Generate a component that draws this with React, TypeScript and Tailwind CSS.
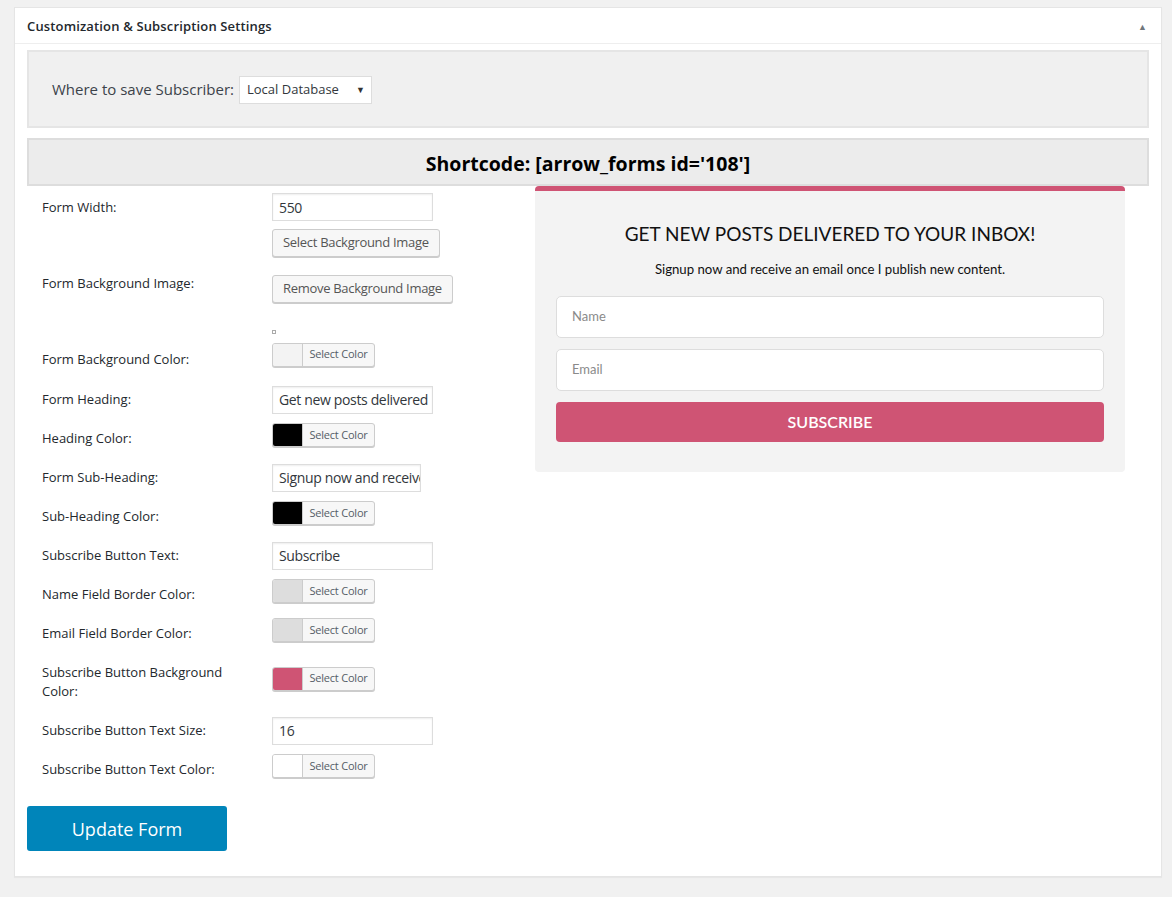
import React from "react"

const ColorButton = ({ color }: { color: string }) => (
    <button
        type="button"
        className="mb-[7px] flex h-[24px] w-[103px] overflow-hidden rounded-[3px] border border-[#cccccc] bg-[#f7f7f7] p-0 shadow-[0_1px_0_#cccccc]"
    >
        <span className="h-full w-[30px] border-r border-[#cccccc]" style={{ backgroundColor: color }} />
        <span className="flex h-full flex-1 items-center justify-center text-[11px] tracking-[-0.2px] text-[#555d66]">Select Color</span>
    </button>
)

const TextInput = ({ value, width = "w-[161px]" }: { value: string; width?: string }) => (
    <div className={`flex h-[28px] items-center overflow-hidden whitespace-nowrap border border-[#dddddd] bg-white px-[6px] text-[14px] tracking-[-0.35px] text-[#32373c] shadow-[inset_0_1px_2px_rgba(0,0,0,0.07)] ${width}`}>
        {value}
    </div>
)

const Row = ({ label, h, children }: { label: React.ReactNode; h: string; children: React.ReactNode }) => (
    <div className={`flex items-center ${h}`}>
        <div className="w-[230px] pr-[20px] text-[13px] leading-[19px] text-[#23282d]">{label}</div>
        <div>{children}</div>
    </div>
)

const WpButton = ({ children }: { children: React.ReactNode }) => (
    <button
        type="button"
        className="h-[28px] whitespace-nowrap rounded-[3px] border border-[#cccccc] bg-[#f7f7f7] px-[10px] text-[13px] tracking-[-0.3px] text-[#555555] shadow-[0_1px_0_#cccccc]"
    >
        {children}
    </button>
)

export default function App() {
    return (
        <div className="min-h-[897px] bg-[#f1f1f1] pl-[14px] pt-[7px] font-['Open_Sans',sans-serif]">
            <div className="w-[1148px] border border-[#e5e5e5] bg-white shadow-[0_1px_1px_rgba(0,0,0,0.04)]">
                {/* header */}
                <div className="flex h-[36px] items-center justify-between border-b border-[#eeeeee] pl-[12px] pr-[14px] pt-[2px]">
                    <h2 className="text-[13px] font-semibold tracking-[0.15px] text-[#23282d]">Customization &amp; Subscription Settings</h2>
                    <span className="text-[9px] text-[#72777c]">▲</span>
                </div>

                <div className="px-[12px] pb-[25px] pt-[6px]">
                    {/* save location */}
                    <div className="flex h-[78px] items-center border-2 border-[#e5e5e5] bg-[#f0f0f0] pl-[23px] pt-[1px]">
                        <span className="text-[15px] text-[#3c434a]">Where to save Subscriber:</span>
                        <div className="ml-[5px] flex h-[28px] w-[133px] items-center justify-between border border-[#dddddd] bg-white pl-[7px] pr-[6px] text-[13px] text-[#32373c]">
                            <span>Local Database</span>
                            <span className="text-[9px] text-[#333333]">▼</span>
                        </div>
                    </div>

                    {/* shortcode */}
                    <div className="mt-[10px] flex h-[48px] items-center justify-center border-2 border-[#dddddd] bg-[#ececec] pt-[3px]">
                        <span className="text-[19.5px] font-bold text-black">Shortcode: [arrow_forms id='108']</span>
                    </div>

                    <div className="flex">
                        {/* settings */}
                        <div className="w-[508px] pl-[15px] pt-[1px]">
                            <Row label="Form Width:" h="h-[40px]">
                                <TextInput value="550" />
                            </Row>
                            <Row label={<span className="block pt-[3px]">Form Background Image:</span>} h="h-[109px]">
                                <div className="flex flex-col items-start">
                                    <WpButton>Select Background Image</WpButton>
                                    <div className="mt-[18px]">
                                        <WpButton>Remove Background Image</WpButton>
                                    </div>
                                    <div className="mt-[27px] h-[4px] w-[4px] border border-[#aaaaaa]" />
                                </div>
                            </Row>
                            <Row label={<span className="block pt-[2px]">Form Background Color:</span>} h="h-[44px]">
                                <ColorButton color="#f3f3f3" />
                            </Row>
                            <Row label="Form Heading:" h="h-[39px]">
                                <TextInput value="Get new posts delivered" />
                            </Row>
                            <Row label="Heading Color:" h="h-[39px]">
                                <ColorButton color="#000000" />
                            </Row>
                            <Row label="Form Sub-Heading:" h="h-[39px]">
                                <TextInput value="Signup now and receive" width="w-[149px]" />
                            </Row>
                            <Row label="Sub-Heading Color:" h="h-[39px]">
                                <ColorButton color="#000000" />
                            </Row>
                            <Row label="Subscribe Button Text:" h="h-[39px]">
                                <TextInput value="Subscribe" />
                            </Row>
                            <Row label="Name Field Border Color:" h="h-[39px]">
                                <ColorButton color="#dddddd" />
                            </Row>
                            <Row label="Email Field Border Color:" h="h-[39px]">
                                <ColorButton color="#dddddd" />
                            </Row>
                            <Row label="Subscribe Button Background Color:" h="h-[58px]">
                                <ColorButton color="#cf5474" />
                            </Row>
                            <Row label="Subscribe Button Text Size:" h="h-[39px]">
                                <TextInput value="16" />
                            </Row>
                            <Row label="Subscribe Button Text Color:" h="h-[39px]">
                                <ColorButton color="#ffffff" />
                            </Row>
                        </div>

                        {/* preview */}
                        <div className="w-[590px] self-start rounded-[4px] border-t-[5px] border-[#cf5474] bg-[#f3f3f3] px-[21px] pb-[30px] pt-[31px] font-['Lato',sans-serif]">
                            <h3 className="text-center text-[19px] leading-[24px] text-[#111111]">GET NEW POSTS DELIVERED TO YOUR INBOX!</h3>
                            <p className="mt-[14px] text-center text-[13.2px] leading-[18px] text-[#111111]">
                                Signup now and receive an email once I publish new content.
                            </p>
                            <div className="mt-[18px] flex h-[42px] items-center rounded-[5px] border border-[#dddddd] bg-white pl-[15px] text-[13px] text-[#8a8a8a]">
                                Name
                            </div>
                            <div className="mt-[11px] flex h-[42px] items-center rounded-[5px] border border-[#dddddd] bg-white pl-[15px] text-[13px] text-[#8a8a8a]">
                                Email
                            </div>
                            <button
                                type="button"
                                className="mt-[11px] flex h-[40px] w-full items-center justify-center rounded-[4px] bg-[#cf5474] text-[16px] font-semibold text-white"
                            >
                                SUBSCRIBE
                            </button>
                        </div>
                    </div>

                    <button
                        type="button"
                        className="mt-[17px] h-[45px] w-[200px] rounded-[3px] bg-[#0085ba] pt-[1px] text-[18px] text-white"
                    >
                        Update Form
                    </button>
                </div>
            </div>
        </div>
    )
}
